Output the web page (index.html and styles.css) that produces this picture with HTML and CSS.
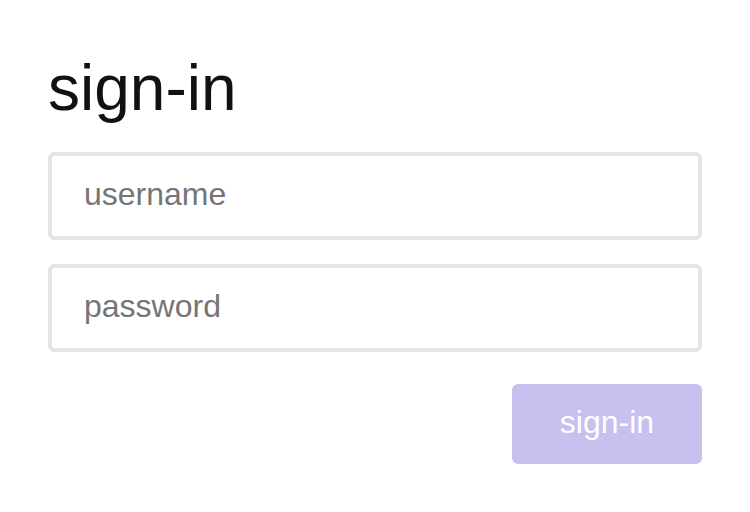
FILE: index.html
```html
<!DOCTYPE html>
<html lang="en">
<head>
<meta charset="utf-8">
<title>sign-in</title>
<link rel="stylesheet" href="styles.css">
</head>
<body>
<main class="page">
  <h1 class="title">sign-in</h1>
  <form class="form">
    <input class="field" type="text" placeholder="username">
    <input class="field" type="password" placeholder="password">
    <div class="actions">
      <button class="btn" type="button">sign-in</button>
    </div>
  </form>
</main>
</body>
</html>
```
FILE: styles.css
```css
html, body {
  margin: 0;
  padding: 0;
  background: #ffffff;
}
body {
  font-family: "Liberation Sans", Arial, sans-serif;
}
.page {
  padding: 51px 48px 48px 48px;
  display: flex;
  flex-direction: column;
  gap: 24px;
}
.title {
  margin: 0 0 3px 0;
  font-size: 64px;
  font-weight: 400;
  line-height: 74px;
  color: #111111;
}
.form {
  display: flex;
  flex-direction: column;
  gap: 24px;
}
.field {
  box-sizing: border-box;
  width: 100%;
  height: 88px;
  border: 4px solid #e5e5e5;
  border-radius: 6px;
  padding: 0 32px 3px 32px;
  font-family: "Liberation Sans", Arial, sans-serif;
  font-size: 32px;
  color: #111111;
  background: #ffffff;
  outline: none;
}
.field::placeholder {
  color: #757575;
}
.actions {
  display: flex;
  justify-content: flex-end;
  margin-top: 8px;
}
.btn {
  box-sizing: border-box;
  width: 190px;
  height: 80px;
  border: none;
  border-radius: 6px;
  background: #c8c0ee;
  color: #ffffff;
  font-family: "Liberation Sans", Arial, sans-serif;
  font-size: 32px;
  padding: 0 0 4px 0;
}
```
